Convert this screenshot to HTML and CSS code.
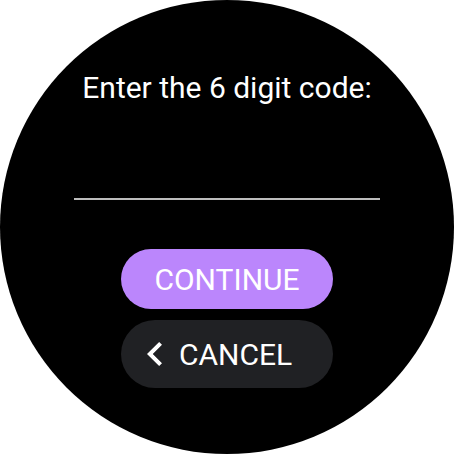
FILE: index.html
```html
<!DOCTYPE html>
<html>
<head>
<meta charset="utf-8">
<link rel="stylesheet" href="styles.css">
</head>
<body>
<div class="watch">
  <div class="title">Enter the 6 digit code:</div>
  <div class="field"></div>
  <div class="actions">
    <button class="btn btn-primary">CONTINUE</button>
    <button class="btn btn-secondary">
      <svg class="chev" width="15" height="24" viewBox="8 6 7.41 12" preserveAspectRatio="none"><path d="M15.41 7.41L14 6l-6 6 6 6 1.41-1.41L10.83 12z" fill="#fff"/></svg>
      <span>CANCEL</span>
    </button>
  </div>
</div>
</body>
</html>
```

FILE: styles.css
```css
html, body {
  margin: 0;
  padding: 0;
  background: #fff;
}
.watch {
  width: 454px;
  height: 454px;
  border-radius: 50%;
  background: #000;
  overflow: hidden;
  display: flex;
  flex-direction: column;
  align-items: center;
  font-family: Roboto, "Liberation Sans", sans-serif;
  color: #fff;
  box-sizing: border-box;
  padding-top: 70px;
}
.title {
  font-size: 30px;
  line-height: 35px;
}
.field {
  width: 306px;
  height: 2px;
  background: #bdbdbd;
  margin-top: 93px;
}
.actions {
  display: flex;
  flex-direction: column;
  gap: 11px;
  margin-top: 49px;
}
.btn {
  width: 212px;
  border: none;
  border-radius: 34px;
  font-family: Roboto, "Liberation Sans", sans-serif;
  font-size: 30px;
  color: #fff;
  display: flex;
  align-items: center;
  padding: 0;
  margin: 0;
}
.btn-primary {
  height: 60px;
  background: #bb86fc;
  justify-content: center;
  border-radius: 30px;
}
.btn-secondary {
  height: 68px;
  background: #202124;
  justify-content: flex-start;
  padding-left: 26px;
  gap: 17px;
}
.chev {
  display: block;
  flex: none;
}
```
